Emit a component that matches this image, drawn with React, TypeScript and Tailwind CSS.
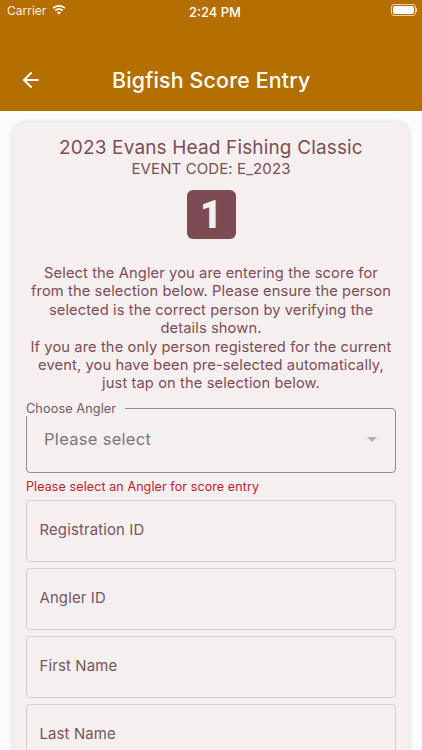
import { ArrowLeft } from "lucide-react";

const para = [
  "Select the Angler you are entering the score for",
  "from the selection below. Please ensure the person",
  "selected is the correct person by verifying the",
  "details shown.",
  "If you are the only person registered for the current",
  "event, you have been pre-selected automatically,",
  "just tap on the selection below.",
];

const fields = ["Registration ID", "Angler ID", "First Name", "Last Name"];

function StatusBar() {
  return (
    <div className="h-[22px] flex items-center justify-between pl-[7px] pr-[5px] text-white text-[12px] relative">
      <div className="flex items-center gap-[6px] text-[#fbeedb] pt-[1px]">
        <span>Carrier</span>
        <svg width="14" height="10" viewBox="0 0 15 11" fill="#fff" className="-mt-[2px]">
          <path d="M7.5 0C4.7 0 2.2 1.1 0.3 2.9l1.2 1.3C3.1 2.7 5.2 1.8 7.5 1.8s4.4.9 6 2.4l1.2-1.3C12.8 1.1 10.3 0 7.5 0z" />
          <path d="M7.5 3.6c-1.8 0-3.5.7-4.7 1.9L4 6.8c.9-.9 2.2-1.4 3.5-1.4s2.6.5 3.5 1.4l1.2-1.3C11 4.3 9.3 3.6 7.5 3.6z" />
          <path d="M7.5 7.2c-.9 0-1.7.3-2.3.9l2.3 2.5 2.3-2.5c-.6-.6-1.4-.9-2.3-.9z" />
        </svg>
      </div>
      <span className="absolute left-[189px] top-[3px] font-medium text-[13px]">2:24 PM</span>
      <div className="flex items-center">
        <div className="w-[25px] h-[12px] rounded-[3px] border border-[#e8d3b0] p-[1px]">
          <div className="w-full h-full bg-white rounded-[2px]" />
        </div>
        <div className="w-[1px] h-[4px] bg-[#e8d3b0]" />
      </div>
    </div>
  );
}

export default function App() {
  return (
    <div className="w-[422px] h-[750px] overflow-hidden bg-[#fcfbfb] font-['Inter','Roboto',sans-serif]">
      <div className="h-[111px] bg-[#b56e00] flex flex-col">
        <StatusBar />
        <div className="flex items-center mt-[29px] h-[64px] text-white">
          <ArrowLeft size={24} strokeWidth={2} className="ml-[19px]" />
          <h1 className="ml-[69px] text-[21.3px] font-medium leading-none tracking-[0.2px]">Bigfish Score Entry</h1>
        </div>
      </div>

      <div className="mx-[13px] mt-[11px] h-[640px] rounded-t-[14px] bg-[#f5eff0] shadow-[0_0_5px_rgba(0,0,0,0.14)] px-[13px] pt-[14px] text-[#7d4d55]">
        <div className="text-center text-[19px] leading-[24px] tracking-[0.15px]">2023 Evans Head Fishing Classic</div>
        <div className="text-center text-[15px] leading-[17px] tracking-[0.1px]">EVENT CODE: E_2023</div>

        <div className="mt-[13px] mx-auto w-[49px] h-[49px] rounded-[6px] bg-[#7d4c53] flex items-center justify-center text-[#f5eff0] text-[38px] font-black leading-none font-['Roboto',sans-serif]">1</div>

        <div className="mt-[25px] text-center text-[14.7px] leading-[18.4px] tracking-[0.1px] whitespace-nowrap">
          {para.map((line) => (
            <div key={line}>{line}</div>
          ))}
        </div>

        <div className="relative mt-[15px] h-[65px] rounded-[4px] border border-[#938b8c] flex items-center justify-between pl-[17px] pr-[18px]">
          <span className="absolute left-[-1px] top-[-8px] bg-[#f5eff0] pr-[9px] text-[12.7px] leading-[15px] tracking-[0.1px] text-[#6f5d60]">Choose Angler</span>
          <span className="text-[16.5px] tracking-[0.3px] text-[#7b7577] -mt-[2px]">Please select</span>
          <span className="w-0 h-0 border-x-[5px] border-x-transparent border-t-[5px] border-t-[#b5aeaf] -mt-[1px]" />
        </div>

        <div className="mt-[6px] text-[12.5px] leading-[16px] tracking-[0.1px] text-[#c3202c]">Please select an Angler for score entry</div>

        <div className="mt-[5px] flex flex-col gap-[6px]">
          {fields.map((f) => (
            <div key={f} className="h-[62px] shrink-0 rounded-[4px] border border-[#d6cdcf] flex items-center pl-[12.5px] pb-[2px] text-[14.9px] tracking-[0.15px] text-[#75565b]">
              {f}
            </div>
          ))}
        </div>
      </div>
    </div>
  );
}
